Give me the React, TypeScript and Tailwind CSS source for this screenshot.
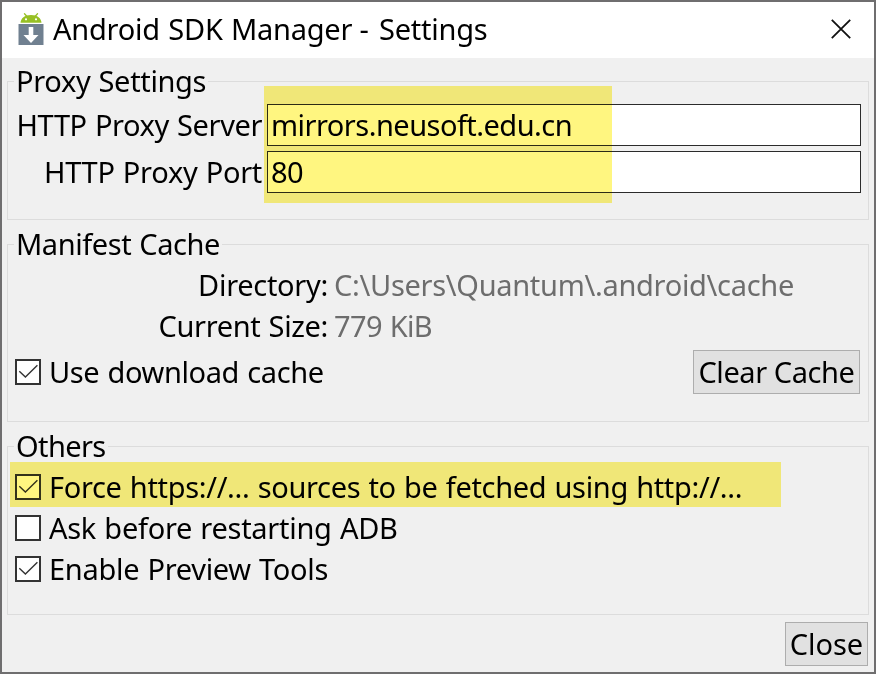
import type { ReactNode } from "react";

function Check({ checked, label, tracking }: { checked: boolean; label: string; tracking: string }) {
  return (
    <label className="flex h-[41px] items-start">
      <span className="mt-2 mr-2 block size-[26px] shrink-0 border-2 border-[#333] bg-white">
        {checked && (
          <svg viewBox="2 2 22 22" className="size-[22px]" fill="none" stroke="#333" strokeWidth="1.4">
            <path d="M4.3 12.2 10.4 18 22.4 6.2" />
          </svg>
        )}
      </span>
      <span className={tracking}>{label}</span>
    </label>
  );
}

function Group({ title, tracking, className, children }: { title: string; tracking: string; className: string; children: ReactNode }) {
  return (
    <section className={`border border-[#dcdcdc] ${className}`}>
      <h2 className={`-mt-[22px] ml-1.5 w-fit ${tracking}`}>
        <span className="block h-[41px] bg-[#f0f0f0] pr-0.5 pl-0.5">{title}</span>
      </h2>
      {children}
    </section>
  );
}

function Field({ label, tracking, value, valueTracking }: { label: string; tracking: string; value: string; valueTracking: string }) {
  return (
    <div className="flex h-[42px]">
      <span className={`mr-[5px] w-[247px] text-right ${tracking}`}>{label}</span>
      <div className={`w-[594px] border border-[#2b2b2b] bg-white pl-[3px] ${valueTracking}`}>
        <span className="-mt-px block">{value}</span>
      </div>
    </div>
  );
}

function AppIcon() {
  return (
    <svg viewBox="0 0 26 32" className="h-8 w-[26px]">
      <path d="M6.500.8 9 3.500M19.500.8 17 3.500" stroke="#97c024" strokeWidth="1.300" strokeLinecap="round" />
      <path d="M2.500 9.800C2.800 5 6.500 1.900 13 1.900S23.200 5 23.500 9.800z" fill="#97c024" />
      <circle cx="8" cy="6.300" r="1.100" fill="#fff" />
      <circle cx="18" cy="6.300" r="1.100" fill="#fff" />
      <path d="M.5 11h25v21H.5z" fill="#708090" />
      <path d="M10.700 14h4.600v8h5.200L13 30l-7.500-8h5.200z" fill="#fff" />
    </svg>
  );
}

export default function App() {
  return (
    <main className="relative flex h-[674px] w-[876px] flex-col overflow-hidden border-2 border-[#6f6e6f] bg-[#f0f0f0] font-['Noto_Sans','Open_Sans',sans-serif] text-[29px] leading-[41px] whitespace-pre text-black [word-spacing:1px]">
      <header className="flex h-14 shrink-0 items-start bg-white pl-4">
        <div className="mt-[11px] mr-[9px]">
          <AppIcon />
        </div>
        <h1 className="mt-1.5 tracking-[-0.23px]">Android SDK Manager <span className="mr-0.5 ml-[-1px]">-</span> Settings</h1>
        <svg viewBox="0 0 20 20" className="mt-[17px] mr-[23px] ml-auto size-5" stroke="#111" strokeWidth="1.8">
          <path d="M.8.8l18.400 18.400M19.200.8.8 19.200" />
        </svg>
      </header>

      <div className="flex flex-col pt-[23px] pl-[5px]">
        <Group title="Proxy Settings" tracking="tracking-[-0.34px]" className="h-[139px] w-[862px]">
          <div className="mt-[3px] flex flex-col gap-[5px] pl-[7px]">
            <Field label="HTTP Proxy Server" tracking="tracking-[-0.4px]" value="mirrors.neusoft.edu.cn" valueTracking="tracking-[-0.53px]" />
            <Field label="HTTP Proxy Port" tracking="tracking-[-0.3px]" value="80" valueTracking="tracking-[-0.5px]" />
          </div>
        </Group>

        <Group title="Manifest Cache" tracking="tracking-[-0.43px]" className="mt-6 h-[178px] w-[862px]">
          <div className="flex">
            <span className="w-80 text-right tracking-[-0.3px]">Directory:</span>
            <span className="ml-1.5 tracking-[-0.3px] text-[#6d6d6d]">C:\Users\Quantum\.android\cache</span>
          </div>
          <div className="flex">
            <span className="w-80 text-right tracking-[-0.35px]">Current Size:</span>
            <span className="ml-1.5 tracking-[-0.65px] text-[#6d6d6d]">779 KiB</span>
          </div>
          <div className="mt-1 flex items-start justify-between pr-2 pl-[7px]">
            <div className="pt-px">
              <Check checked label="Use download cache" tracking="tracking-[-0.38px]" />
            </div>
            <button className="flex h-11 w-[167px] justify-center border border-[#adadad] bg-[#e1e1e1] tracking-[-0.42px]">Clear Cache</button>
          </div>
        </Group>

        <Group title="Others" tracking="tracking-[-0.6px]" className="mt-6 h-[169px] w-[862px]">
          <div className="pl-[7px]">
            <Check checked label="Force https://... sources to be fetched using http://..." tracking="tracking-[-0.33px]" />
            <Check checked={false} label="Ask before restarting ADB" tracking="tracking-[-0.28px]" />
            <Check checked label="Enable Preview Tools" tracking="tracking-[-0.3px]" />
          </div>
        </Group>

        <button className="mt-[7px] ml-[778px] flex h-11 w-[83px] justify-center border border-[#adadad] bg-[#e1e1e1] tracking-[-0.05px]">Close</button>
      </div>

      <div className="pointer-events-none absolute top-[84px] left-[262px] h-[117px] w-[348px] bg-[#fff680] mix-blend-multiply" />
      <div className="pointer-events-none absolute top-[460px] left-2 h-[45px] w-[771px] bg-[#fff680] mix-blend-multiply" />
    </main>
  );
}
